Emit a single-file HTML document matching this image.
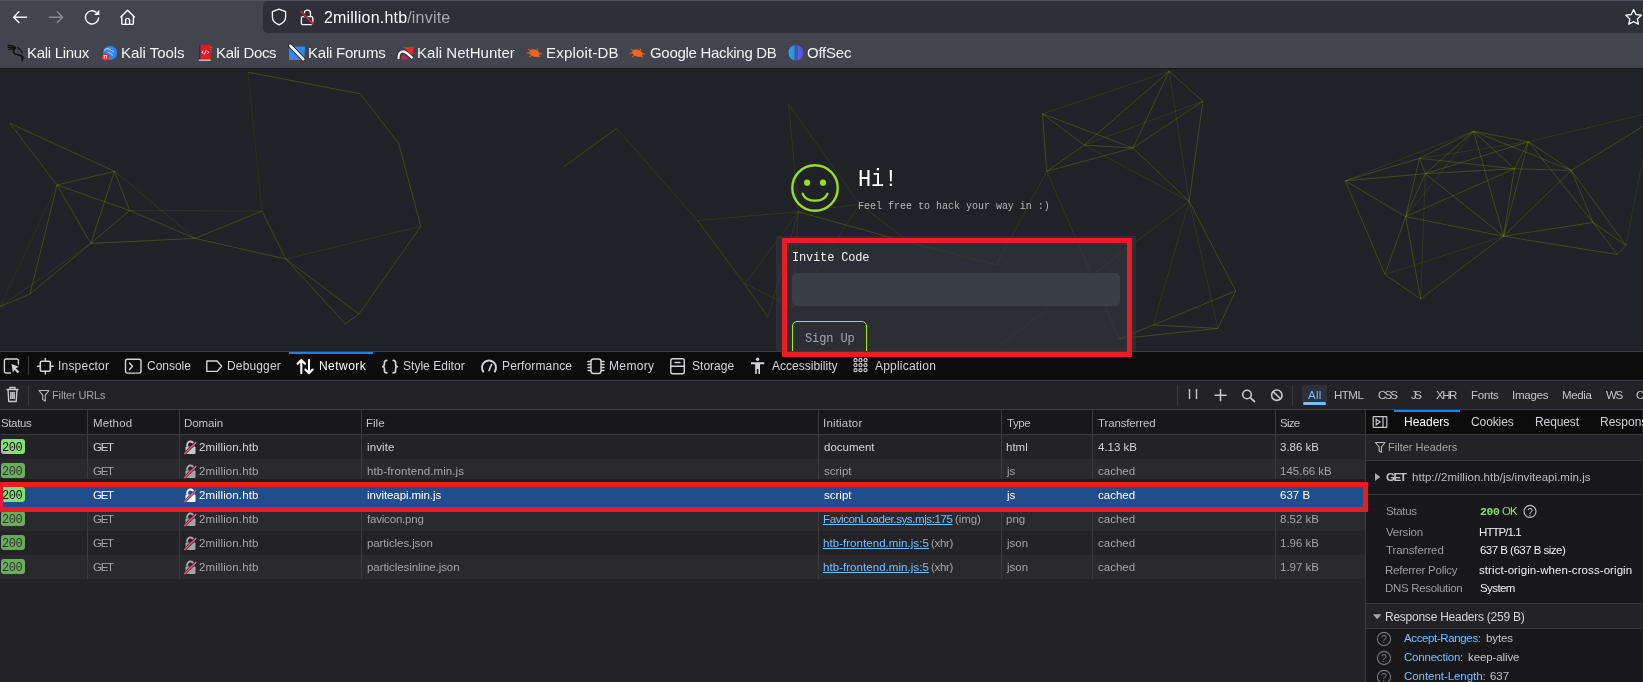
<!DOCTYPE html>
<html><head><meta charset="utf-8"><style>
*{box-sizing:border-box;margin:0;padding:0}
html,body{width:1643px;height:682px;overflow:hidden;background:#232327;font-family:"Liberation Sans",sans-serif;position:relative}
.t{position:absolute;white-space:nowrap;will-change:transform}
.b{position:absolute}
svg{position:absolute;overflow:visible}
.lnk{color:#75bfff;text-decoration:underline;text-underline-offset:1px}
</style></head><body>
<div class="b" style="left:0;top:0;width:1643px;height:68px;background:#42454e"></div>
<div class="b" style="left:0;top:0;width:1643px;height:1px;background:#53565e"></div>
<div class="b" style="left:263px;top:1px;width:1400px;height:32px;background:#2f3037;border-radius:5px"></div>
<svg style="left:0;top:0" width="160" height="35"><g fill="none" stroke="#fbfbfe" stroke-width="1.4" stroke-linecap="round" stroke-linejoin="round"><path d="M13.6 17.2H26.6M18.9 11.8L13.6 17.2L18.9 22.6"/></g><g fill="none" stroke="#8c8d93" stroke-width="1.4" stroke-linecap="round" stroke-linejoin="round"><path d="M49.6 17.2H62.6M57.3 11.8L62.6 17.2L57.3 22.6"/></g><path d="M98.6 17.4A6.6 6.6 0 1 1 96.4 12.4" fill="none" stroke="#fbfbfe" stroke-width="1.4"/><path d="M99.3 9.8V15H94.1Z" fill="#fbfbfe"/><g fill="none" stroke="#fbfbfe" stroke-width="1.4" stroke-linejoin="round" stroke-linecap="round"><path d="M120.8 17.1L127.6 10.3L134.4 17.1"/><path d="M121.8 16.4V23.2Q121.8 24.4 123 24.4H132.2Q133.4 24.4 133.4 23.2V16.4"/><path d="M125.6 24.4V20.4A2 2 0 0 1 129.6 20.4V24.4"/></g></svg>
<svg style="left:0;top:0" width="330" height="35"><path d="M279 9.2L285.6 11.7V17.2C285.6 20.6 282.6 23.3 279 24.8C275.4 23.3 272.4 20.6 272.4 17.2V11.7Z" fill="none" stroke="#fbfbfe" stroke-width="1.3" stroke-linejoin="round"/><path d="M304.3 16.5V13.3A3.1 3.1 0 0 1 310.5 13.3V16.5" fill="none" stroke="#fbfbfe" stroke-width="1.3"/><rect x="301.4" y="16.7" width="11.4" height="7.9" rx="1.3" fill="none" stroke="#fbfbfe" stroke-width="1.3"/><path d="M300.4 11L313.6 24.6" stroke="#2f3037" stroke-width="2.6"/><path d="M300.4 11L313.6 24.6" stroke="#e0234e" stroke-width="1.4"/></svg>
<div class="t" style="left:324.20px;top:9.76px;font-family:'Liberation Sans',sans-serif;font-size:16px;line-height:16px;letter-spacing:0.192px;color:#fbfbfe;">2million.htb<span style="color:#a9aab0">/invite</span></div>
<svg style="left:1616.5px;top:0" width="28" height="35"><path d="M1.6 0" fill="none"/><path d="M16.6 9.6L19 14.5L24.3 15.2L20.4 18.9L21.4 24.2L16.6 21.7L11.8 24.2L12.8 18.9L8.9 15.2L14.2 14.5Z" fill="none" stroke="#fbfbfe" stroke-width="1.3" stroke-linejoin="round"/></svg>
<div class="t" style="left:26.86px;top:45.10px;font-family:'Liberation Sans',sans-serif;font-size:15px;line-height:15px;letter-spacing:-0.300px;color:#f4f4f6;">Kali Linux</div>
<div class="t" style="left:120.96px;top:45.10px;font-family:'Liberation Sans',sans-serif;font-size:15px;line-height:15px;letter-spacing:-0.042px;color:#f4f4f6;">Kali Tools</div>
<div class="t" style="left:216.06px;top:45.10px;font-family:'Liberation Sans',sans-serif;font-size:15px;line-height:15px;letter-spacing:-0.352px;color:#f4f4f6;">Kali Docs</div>
<div class="t" style="left:308.06px;top:45.10px;font-family:'Liberation Sans',sans-serif;font-size:15px;line-height:15px;letter-spacing:-0.226px;color:#f4f4f6;">Kali Forums</div>
<div class="t" style="left:417.16px;top:45.10px;font-family:'Liberation Sans',sans-serif;font-size:15px;line-height:15px;letter-spacing:0.025px;color:#f4f4f6;">Kali NetHunter</div>
<div class="t" style="left:546.26px;top:45.10px;font-family:'Liberation Sans',sans-serif;font-size:15px;line-height:15px;letter-spacing:0.194px;color:#f4f4f6;">Exploit-DB</div>
<div class="t" style="left:649.75px;top:45.10px;font-family:'Liberation Sans',sans-serif;font-size:15px;line-height:15px;letter-spacing:-0.306px;color:#f4f4f6;">Google Hacking DB</div>
<div class="t" style="left:807.29px;top:45.10px;font-family:'Liberation Sans',sans-serif;font-size:15px;line-height:15px;letter-spacing:-0.228px;color:#f4f4f6;">OffSec</div>
<svg style="left:0;top:36px" width="860" height="30"><g fill="none" stroke="#0d0d0d" stroke-linecap="round"><path d="M8.2 9.5C11 9.3 13.5 9.8 15.2 11.5M8.2 11.4C11 11.2 13 11.5 14.6 12.5M8.6 13.3C10.6 13 12.5 12.8 14 13" stroke-width="1.3"/><path d="M15.4 12C13 13.5 12.8 16.5 14.8 17.8C16.8 19 19.6 18.5 21.1 20C22.1 21 22.2 23 22.5 24.5" stroke-width="1.5"/><path d="M17.5 11.5C19.5 12.5 21.5 14.5 22.2 16.5M21.5 19.5C23 20.5 23.8 21.5 24 22.5" stroke-width="1.1"/></g><circle cx="110.1" cy="16.9" r="7" fill="#2f86f6"/><path d="M103.8 14.5C106 12.3 108.5 12.2 110 13.5C111.5 14.8 113 15.5 114.2 15.8M107.5 16C109.5 16.5 111.5 18 113 19.5" fill="none" stroke="#cfe6ff" stroke-width="0.9"/><circle cx="105.7" cy="21.1" r="3.7" fill="#e8262b"/><path d="M104.2 19.6V22.8M106.6 19.6V22.8M103.6 19.6H107.3" stroke="#fff" stroke-width="0.8"/><rect x="198.9" y="8.9" width="11.8" height="14.9" fill="#e3191c"/><rect x="198.9" y="8.9" width="1.6" height="14.9" fill="#1d2f7a"/><rect x="198.9" y="23.6" width="11.8" height="1.1" fill="#e8e8e8"/><rect x="210.7" y="10.8" width="0.9" height="1.6" fill="#f08020"/><rect x="210.7" y="13" width="0.9" height="1.6" fill="#3aa050"/><rect x="210.7" y="15.2" width="0.9" height="1.6" fill="#5060d0"/><path d="M203.2 14.8L202 16.3L203.2 17.8M207.4 14.8L208.6 16.3L207.4 17.8M206.2 14.3L204.4 18.4" fill="none" stroke="#fff" stroke-width="1"/><path d="M289 10.4H305.1L304.2 23.9H289Z" fill="#2f86f6"/><path d="M290.3 9.8L303.3 23.2" stroke="#111" stroke-width="4.2" stroke-linecap="round"/><path d="M290.3 9.8L303.3 23.2" stroke="#f4f4f4" stroke-width="2.8" stroke-linecap="round"/><path d="M402.8 11H413.9L412.3 19.5Z" fill="#f0282d"/><path d="M398.5 22.8C398 18 400.5 15 403.5 15.5C406.5 16 409.5 19.5 412.5 22.2" fill="none" stroke="#111" stroke-width="3.6"/><path d="M398.5 22.8C398 18 400.5 15 403.5 15.5C406.5 16 409.5 19.5 412.5 22.2" fill="none" stroke="#f8f8f8" stroke-width="2.4"/><path d="M401.5 23.5C401 20 402.5 18.6 404 19.2C405.5 19.8 407 21.5 408 23.3Z" fill="#d81b50"/><ellipse cx="534.5" cy="17.2" rx="5.5" ry="3.6" transform="rotate(20 534.5 17.2)" fill="#f0641e"/><path d="M528 13L531 15M529 21L532 19M537 12.5L538 14.5M540 21L537.5 19.5M526.5 17L529.5 17M539.5 17.5L542 18" stroke="#f0641e" stroke-width="1"/><ellipse cx="637.5" cy="17.2" rx="5.5" ry="3.6" transform="rotate(20 637.5 17.2)" fill="#f0641e"/><path d="M631 13L634 15M632 21L635 19M640 12.5L641 14.5M643 21L640.5 19.5M629.5 17L632.5 17M642.5 17.5L645 18" stroke="#f0641e" stroke-width="1"/><defs><linearGradient id="og" x1="0" y1="0" x2="1" y2="0"><stop offset="0" stop-color="#19b4f0"/><stop offset="1" stop-color="#6a3fd8"/></linearGradient></defs><ellipse cx="796" cy="16.8" rx="7.5" ry="7.8" fill="url(#og)"/><path d="M795.2 8.5V25.5M797 8.5V25.5" stroke="#42454e" stroke-width="0.9"/><path d="M796.1 18V24.5" stroke="#7a3fe0" stroke-width="0.9"/></svg>
<div class="b" style="left:0;top:68px;width:1643px;height:283px;background:#1f2226"></div>
<div class="b" style="left:0;top:68px;width:1643px;height:1px;background:#17191d"></div>
<svg style="left:0;top:68px" width="1643" height="283"><path d="M10.0 55.4L57.0 117.0M10.0 55.4L114.6 103.3M57.0 117.0L114.6 103.3M57.0 117.0L129.6 142.5M114.6 103.3L129.6 142.5M57.0 117.0L90.8 175.4M114.6 103.3L90.8 175.4M129.6 142.5L90.8 175.4M129.6 142.5L195.0 170.4M90.8 175.4L195.0 170.4M195.0 170.4L262.0 143.0M195.0 170.4L285.8 191.0M262.0 143.0L285.8 191.0M248.0 4.2L360.4 25.8M360.4 25.8L398.8 75.8M398.8 75.8L420.8 158.3M420.8 158.3L359.0 246.0M285.8 191.0L345.4 255.8M345.4 255.8L359.0 246.0M90.8 175.4L30.0 226.0M30.0 226.0L0.0 238.7M57.0 117.0L30.0 226.0M285.8 191.0L359.0 246.0M563.7 98.8L616.7 60.4M1169.2 3.3L1202.9 33.3M1169.2 3.3L1132.9 80.0M1169.2 3.3L1084.2 77.1M1042.5 45.8L1132.9 80.0M1202.9 33.3L1132.9 80.0M1202.9 33.3L1189.2 133.3M1042.5 45.8L1084.2 77.1M1042.5 45.8L1046.7 103.3M1084.2 77.1L1132.9 80.0M1046.7 103.3L1084.2 77.1M1046.7 103.3L1132.9 80.0M1132.9 80.0L1189.2 133.3M1189.2 133.3L1235.8 222.9M1235.8 222.9L1217.9 260.4M1235.8 222.9L1153.3 257.0M1153.3 257.0L1217.9 260.4M1153.3 257.0L1119.2 270.8M1119.2 270.8L1217.9 260.4M798.3 143.8L910.8 175.0M1345.3 112.8L1419.5 90.3M1345.3 112.8L1425.3 105.7M1345.3 112.8L1405.7 148.6M1345.3 112.8L1384.9 206.5M1419.5 90.3L1425.3 105.7M1419.5 90.3L1473.6 63.3M1419.5 90.3L1514.4 100.8M1419.5 90.3L1405.7 148.6M1425.3 105.7L1473.6 63.3M1425.3 105.7L1514.4 100.8M1425.3 105.7L1405.7 148.6M1425.3 105.7L1503.5 168.2M1473.6 63.3L1528.5 73.7M1473.6 63.3L1514.4 100.8M1473.6 63.3L1503.5 168.2M1528.5 73.7L1514.4 100.8M1528.5 73.7L1571.4 102.4M1528.5 73.7L1593.0 154.5M1514.4 100.8L1571.4 102.4M1514.4 100.8L1503.5 168.2M1571.4 102.4L1503.5 168.2M1571.4 102.4L1593.0 154.5M1571.4 102.4L1626.0 177.4M1405.7 148.6L1503.5 168.2M1405.7 148.6L1384.9 206.5M1405.7 148.6L1420.7 231.0M1528.5 73.7L1503.5 168.2M1425.3 105.7L1528.5 73.7M1405.7 148.6L1514.4 100.8M1473.6 63.3L1571.4 102.4M1503.5 168.2L1593.0 154.5M1503.5 168.2L1617.2 186.5M1593.0 154.5L1626.0 177.4M1593.0 154.5L1617.2 186.5M1626.0 177.4L1617.2 186.5M1384.9 206.5L1420.7 231.0M1420.7 231.0L1503.5 168.2M1571.4 102.4L1650.0 54.0" stroke="#a8e000" stroke-opacity="0.21" stroke-width="1" fill="none"/><path d="M114.6 103.3L195.0 170.4M129.6 142.5L262.0 143.0M285.8 191.0L420.8 158.3M90.8 175.4L0.0 238.7M616.7 60.4L697.5 152.5M697.5 152.5L798.3 143.8M798.3 143.8L788.7 36.3M697.5 152.5L745.0 215.8M697.5 152.5L768.0 249.0M745.0 215.8L768.0 249.0M745.0 215.8L793.0 239.6M798.3 143.8L768.0 249.0M1042.5 45.8L1169.2 3.3M1169.2 3.3L1189.2 133.3M1202.9 33.3L1084.2 77.1M1084.2 77.1L1189.2 133.3M1189.2 133.3L1153.3 257.0M1046.7 103.3L1119.2 270.8M1189.2 133.3L1000.0 277.0M1189.2 133.3L1217.9 260.4M1046.7 103.3L996.3 196.7M996.3 196.7L910.8 175.0M788.7 36.3L859.7 136.3M798.3 143.8L859.7 136.3M859.7 136.3L910.8 175.0M859.7 136.3L793.0 239.6M798.3 143.8L745.0 215.8M798.3 143.8L793.0 239.6M1345.3 112.8L1473.6 63.3M1419.5 90.3L1528.5 73.7M1384.9 206.5L1503.5 168.2M1528.5 73.7L1650.0 45.0M1626.0 177.4L1650.0 54.0M1425.3 105.7L1420.7 231.0M1405.7 148.6L1473.6 63.3" stroke="#a8e000" stroke-opacity="0.11" stroke-width="1" fill="none"/><path d="M262.0 143.0L248.0 4.2M57.0 117.0L0.0 238.7" stroke="#a8e000" stroke-opacity="0.07" stroke-width="1" fill="none"/></svg>
<div class="b" style="left:776px;top:236px;width:360px;height:115px;background:rgba(52,58,66,0.55);border-radius:1px"></div>
<div class="b" style="left:792px;top:272.5px;width:328px;height:33px;background:#3a3f47;border-radius:5px"></div>
<div class="b" style="left:792px;top:321px;width:75px;height:40px;border:1.3px solid #9fef00;border-radius:5px"></div>
<div class="t" style="left:805.15px;top:333.00px;font-family:'Liberation Mono',monospace;font-size:12px;line-height:12px;letter-spacing:-0.123px;color:#a4a7ad;">Sign Up</div>
<div class="t" style="left:791.63px;top:251.70px;font-family:'Liberation Mono',monospace;font-size:12px;line-height:12px;letter-spacing:-0.175px;color:#f2f2f2;">Invite Code</div>
<svg style="left:780px;top:150px" width="80" height="80"><circle cx="35" cy="38" r="22.7" fill="none" stroke="#9fdc1c" stroke-width="2.4"/><circle cx="27.1" cy="32.7" r="3.1" fill="#9fdc1c"/><circle cx="43" cy="32.7" r="3.1" fill="#9fdc1c"/><path d="M22.6 43.7C26.5 53 43.5 53 47.4 43.7" fill="none" stroke="#9fdc1c" stroke-width="2.2" stroke-linecap="round"/></svg>
<div class="t" style="left:857.64px;top:170.04px;font-family:'Liberation Mono',monospace;font-size:22px;line-height:22px;letter-spacing:-0.092px;color:#ffffff;transform:scaleY(1.07);transform-origin:0 85%;">Hi!</div>
<div class="t" style="left:858.45px;top:201.64px;font-family:'Liberation Mono',monospace;font-size:10px;line-height:10px;letter-spacing:-0.006px;color:#b4b6ba;">Feel free to hack your way in :)</div>
<div class="b" style="left:0;top:351px;width:1643px;height:331px;background:#232327"></div>
<div class="b" style="left:0;top:351px;width:1643px;height:1px;background:#3a3a3f"></div>
<div class="b" style="left:0;top:352px;width:1643px;height:28px;background:#0c0c0d"></div>
<div class="b" style="left:0;top:380px;width:1643px;height:1px;background:#3a3a3f"></div>
<div class="b" style="left:289px;top:352px;width:84px;height:2px;background:#0a84ff"></div>
<div class="t" style="left:58.19px;top:360.44px;font-family:'Liberation Sans',sans-serif;font-size:12px;line-height:12px;letter-spacing:0.205px;color:#d4d4d8;">Inspector</div>
<div class="t" style="left:146.90px;top:360.44px;font-family:'Liberation Sans',sans-serif;font-size:12px;line-height:12px;letter-spacing:-0.033px;color:#d4d4d8;">Console</div>
<div class="t" style="left:227.21px;top:360.44px;font-family:'Liberation Sans',sans-serif;font-size:12px;line-height:12px;letter-spacing:0.151px;color:#d4d4d8;">Debugger</div>
<div class="t" style="left:318.51px;top:360.44px;font-family:'Liberation Sans',sans-serif;font-size:12px;line-height:12px;letter-spacing:0.447px;color:#ffffff;">Network</div>
<div class="t" style="left:403.26px;top:360.44px;font-family:'Liberation Sans',sans-serif;font-size:12px;line-height:12px;letter-spacing:0.025px;color:#d4d4d8;">Style Editor</div>
<div class="t" style="left:502.01px;top:360.44px;font-family:'Liberation Sans',sans-serif;font-size:12px;line-height:12px;letter-spacing:0.133px;color:#d4d4d8;">Performance</div>
<div class="t" style="left:609.21px;top:360.44px;font-family:'Liberation Sans',sans-serif;font-size:12px;line-height:12px;letter-spacing:0.354px;color:#d4d4d8;">Memory</div>
<div class="t" style="left:691.76px;top:360.44px;font-family:'Liberation Sans',sans-serif;font-size:12px;line-height:12px;letter-spacing:0.020px;color:#d4d4d8;">Storage</div>
<div class="t" style="left:771.77px;top:360.44px;font-family:'Liberation Sans',sans-serif;font-size:12px;line-height:12px;letter-spacing:0.010px;color:#d4d4d8;">Accessibility</div>
<div class="t" style="left:875.17px;top:360.44px;font-family:'Liberation Sans',sans-serif;font-size:12px;line-height:12px;letter-spacing:0.210px;color:#d4d4d8;">Application</div>
<svg style="left:0;top:352px" width="960" height="27"><g fill="none" stroke="#d4d4d8" stroke-width="1.4" stroke-linejoin="round" stroke-linecap="round"><path d="M10.5 21H6.2A1.8 1.8 0 0 1 4.4 19.2V8.8A1.8 1.8 0 0 1 6.2 7H16.6A1.8 1.8 0 0 1 18.4 8.8V12"/><rect x="40.3" y="9.3" width="10" height="10" rx="1.5" stroke-width="1.6"/><path d="M45.3 6.5V9.3M45.3 19.3V22M37.5 14.3H40.3M50.3 14.3H53.1"/><rect x="125.5" y="7.3" width="15.5" height="13.8" rx="2"/><path d="M129.5 11L132.5 14.2L129.5 17.4"/><path d="M206.8 9H217.2L221.6 14.2L217.2 19.4H206.8Z"/><path d="M301.3 21.3V8M297.6 11.7L301.3 8L305 11.7M309 8V21.3M305.3 17.6L309 21.3L312.7 17.6" stroke="#ffffff" stroke-width="2.1"/><path d="M386.8 8.3C384.6 8.3 384.4 9.3 384.4 11V12.6C384.4 13.7 383.8 14.4 382.8 14.6C383.8 14.8 384.4 15.5 384.4 16.6V18.2C384.4 19.9 384.6 20.9 386.8 20.9" stroke-width="1.7"/><path d="M393.2 8.3C395.4 8.3 395.6 9.3 395.6 11V12.6C395.6 13.7 396.2 14.4 397.2 14.6C396.2 14.8 395.6 15.5 395.6 16.6V18.2C395.6 19.9 395.4 20.9 393.2 20.9" stroke-width="1.7"/><path d="M483.3 19.6A7 7 0 1 1 494.7 19.6" stroke-width="1.9"/><path d="M489 18.5L491.6 12.5" stroke-width="1.7"/><rect x="591" y="7" width="10" height="14.5" rx="2.5"/><path d="M588 9.5H590.5M588 12.5H590.5M588 15.5H590.5M588 18.5H590.5M601.5 9.5H604M601.5 12.5H604M601.5 15.5H604M601.5 18.5H604"/><rect x="670.8" y="6.8" width="13.5" height="15" rx="2"/><path d="M670.8 14.2H684.3M675 10.5H680"/></g><circle cx="757.6" cy="7.3" r="1.7" fill="#d4d4d8"/><path d="M751 10.3H764.3V12.2H760V22H758.4V17H756.8V22H755.2V12.2H751Z" fill="#d4d4d8"/><g fill="none" stroke="#d4d4d8" stroke-width="1.1"><circle cx="855.5" cy="8.2" r="1.6"/><circle cx="855.5" cy="13.2" r="1.6"/><circle cx="855.5" cy="18.2" r="1.6"/><circle cx="860.5" cy="8.2" r="1.6"/><circle cx="860.5" cy="13.2" r="1.6"/><circle cx="860.5" cy="18.2" r="1.6"/><circle cx="865.5" cy="8.2" r="1.6"/><circle cx="865.5" cy="13.2" r="1.6"/><circle cx="865.5" cy="18.2" r="1.6"/></g></svg>
<svg style="left:0;top:352px" width="30" height="27"><path d="M11.5 12L19 14.8L15.8 16.2L19.3 19.7L17.8 21.2L14.3 17.7L12.9 20.8Z" fill="#d4d4d8"/></svg>
<div class="b" style="left:28px;top:356px;width:1px;height:19px;background:#3a3a3f"></div>
<div class="b" style="left:0;top:409px;width:1643px;height:1px;background:#3a3a3f"></div>
<div class="b" style="left:28px;top:385px;width:1px;height:20px;background:#3a3a3f"></div>
<div class="b" style="left:1177px;top:385px;width:1px;height:20px;background:#3a3a3f"></div>
<div class="b" style="left:1292px;top:385px;width:1px;height:20px;background:#3a3a3f"></div>
<div class="t" style="left:52.39px;top:390.29px;font-family:'Liberation Sans',sans-serif;font-size:11px;line-height:11px;letter-spacing:-0.141px;color:#a3a3a7;">Filter URLs</div>
<svg style="left:0;top:380px" width="1300" height="29"><g fill="none" stroke="#c8c8cc" stroke-width="1.4" stroke-linejoin="round"><path d="M6.5 9.5H18.5M10 9.5V7.5H15V9.5M8 9.5L8.8 21.5H16.2L17 9.5M10.8 12V19M12.5 12V19M14.2 12V19"/></g><path d="M39 10.5H49L45.3 15.2V21L42.7 19.5V15.2Z" fill="none" stroke="#b8b8bc" stroke-width="1.1" stroke-linejoin="round"/><g fill="none" stroke="#c8c8cc" stroke-width="1.4" stroke-linecap="round"><path d="M1189.5 9.5V18.5M1196.5 9.5V18.5"/><path d="M1215 15.3H1226M1220.5 9.8V20.8" stroke-width="1.6"/><circle cx="1247" cy="14.5" r="4.3" stroke-width="1.6"/><path d="M1250.2 17.7L1254.5 21.5" stroke-width="1.8"/><circle cx="1276.8" cy="15.2" r="5.2" stroke-width="1.6"/><path d="M1273.2 11.6L1280.4 18.8" stroke-width="1.6"/></g></svg>
<div class="b" style="left:1302px;top:385px;width:25px;height:19px;background:#2c313b;border-radius:2px"></div>
<div class="b" style="left:1303px;top:402px;width:23px;height:2.5px;background:#75bfff;border-radius:2px"></div>
<div class="t" style="left:1307.97px;top:389.77px;font-family:'Liberation Sans',sans-serif;font-size:11.5px;line-height:11.5px;letter-spacing:0.256px;color:#75bfff;">All</div>
<div class="t" style="left:1334.05px;top:389.77px;font-family:'Liberation Sans',sans-serif;font-size:11.5px;line-height:11.5px;letter-spacing:-0.486px;color:#c4c4c8;">HTML</div>
<div class="t" style="left:1377.62px;top:389.77px;font-family:'Liberation Sans',sans-serif;font-size:11.5px;line-height:11.5px;letter-spacing:-1.834px;color:#c4c4c8;">CSS</div>
<div class="t" style="left:1410.83px;top:389.77px;font-family:'Liberation Sans',sans-serif;font-size:11.5px;line-height:11.5px;letter-spacing:-2.436px;color:#c4c4c8;">JS</div>
<div class="t" style="left:1435.64px;top:389.77px;font-family:'Liberation Sans',sans-serif;font-size:11.5px;line-height:11.5px;letter-spacing:-1.544px;color:#c4c4c8;">XHR</div>
<div class="t" style="left:1470.75px;top:389.77px;font-family:'Liberation Sans',sans-serif;font-size:11.5px;line-height:11.5px;letter-spacing:-0.225px;color:#c4c4c8;">Fonts</div>
<div class="t" style="left:1511.74px;top:389.77px;font-family:'Liberation Sans',sans-serif;font-size:11.5px;line-height:11.5px;letter-spacing:-0.231px;color:#c4c4c8;">Images</div>
<div class="t" style="left:1561.55px;top:389.77px;font-family:'Liberation Sans',sans-serif;font-size:11.5px;line-height:11.5px;letter-spacing:-0.372px;color:#c4c4c8;">Media</div>
<div class="t" style="left:1605.94px;top:389.77px;font-family:'Liberation Sans',sans-serif;font-size:11.5px;line-height:11.5px;letter-spacing:-1.469px;color:#c4c4c8;">WS</div>
<div class="t" style="left:1636.12px;top:389.77px;font-family:'Liberation Sans',sans-serif;font-size:11.5px;line-height:11.5px;letter-spacing:0.000px;color:#c4c4c8;">C</div>
<div class="b" style="left:0;top:410px;width:1366px;height:24px;background:#18181a"></div>
<div class="b" style="left:0;top:434px;width:1366px;height:1px;background:#3a3a3f"></div>
<div class="t" style="left:0.98px;top:417.77px;font-family:'Liberation Sans',sans-serif;font-size:11.5px;line-height:11.5px;letter-spacing:-0.377px;color:#c2c2c6;">Status</div>
<div class="t" style="left:92.65px;top:417.77px;font-family:'Liberation Sans',sans-serif;font-size:11.5px;line-height:11.5px;letter-spacing:0.143px;color:#c2c2c6;">Method</div>
<div class="t" style="left:184.05px;top:417.77px;font-family:'Liberation Sans',sans-serif;font-size:11.5px;line-height:11.5px;letter-spacing:-0.090px;color:#c2c2c6;">Domain</div>
<div class="t" style="left:366.35px;top:417.77px;font-family:'Liberation Sans',sans-serif;font-size:11.5px;line-height:11.5px;letter-spacing:0.007px;color:#c2c2c6;">File</div>
<div class="t" style="left:823.04px;top:417.77px;font-family:'Liberation Sans',sans-serif;font-size:11.5px;line-height:11.5px;letter-spacing:0.190px;color:#c2c2c6;">Initiator</div>
<div class="t" style="left:1006.74px;top:417.77px;font-family:'Liberation Sans',sans-serif;font-size:11.5px;line-height:11.5px;letter-spacing:-0.393px;color:#c2c2c6;">Type</div>
<div class="t" style="left:1097.94px;top:417.77px;font-family:'Liberation Sans',sans-serif;font-size:11.5px;line-height:11.5px;letter-spacing:-0.142px;color:#c2c2c6;">Transferred</div>
<div class="t" style="left:1280.28px;top:417.77px;font-family:'Liberation Sans',sans-serif;font-size:11.5px;line-height:11.5px;letter-spacing:-0.720px;color:#c2c2c6;">Size</div>
<div class="b" style="left:0;top:435px;width:1366px;height:24px;background:#232327"></div>
<div class="b" style="left:1px;top:439px;width:24px;height:15px;background:#86de74;border-radius:3px;opacity:1"></div>
<div class="t" style="left:2.46px;top:442.30px;font-family:'Liberation Mono',monospace;font-size:12px;line-height:12px;letter-spacing:-0.420px;color:#0c0c0d;opacity:1;">200</div>
<div class="t" style="left:93.02px;top:441.77px;font-family:'Liberation Sans',sans-serif;font-size:11.5px;line-height:11.5px;letter-spacing:-1.299px;color:#d4d4d8;">GET</div>
<svg style="left:183px;top:440px" width="15" height="15"><path d="M4.2 6.5V4.8A3.3 3.3 0 0 1 10.8 4.8V6.5" fill="none" stroke="#c8c8cc" stroke-width="1.8"/><rect x="2.5" y="6.5" width="10" height="7.5" rx="1" fill="#c8c8cc"/><path d="M1.2 14L13.2 2" stroke="#232327" stroke-width="2.6"/><path d="M1.2 14L13.2 2" stroke="#ff4f7a" stroke-width="1.4"/></svg>
<div class="t" style="left:199.33px;top:441.77px;font-family:'Liberation Sans',sans-serif;font-size:11.5px;line-height:11.5px;letter-spacing:0.107px;color:#d4d4d8;">2million.htb</div>
<div class="t" style="left:366.62px;top:441.77px;font-family:'Liberation Sans',sans-serif;font-size:11.5px;line-height:11.5px;letter-spacing:0.128px;color:#d4d4d8;">invite</div>
<div class="t" style="left:823.61px;top:441.77px;font-family:'Liberation Sans',sans-serif;font-size:11.5px;line-height:11.5px;letter-spacing:0.000px;color:#d4d4d8;">document</div>
<div class="t" style="left:1006.20px;top:441.77px;font-family:'Liberation Sans',sans-serif;font-size:11.5px;line-height:11.5px;letter-spacing:0.000px;color:#d4d4d8;">html</div>
<div class="t" style="left:1097.94px;top:441.77px;font-family:'Liberation Sans',sans-serif;font-size:11.5px;line-height:11.5px;letter-spacing:0.000px;color:#d4d4d8;">4.13 kB</div>
<div class="t" style="left:1280.37px;top:441.77px;font-family:'Liberation Sans',sans-serif;font-size:11.5px;line-height:11.5px;letter-spacing:0.000px;color:#d4d4d8;">3.86 kB</div>
<div class="b" style="left:0;top:459px;width:1366px;height:24px;background:#2a2a2e"></div>
<div class="b" style="left:1px;top:463px;width:24px;height:15px;background:#86de74;border-radius:3px;opacity:0.72"></div>
<div class="t" style="left:2.46px;top:466.30px;font-family:'Liberation Mono',monospace;font-size:12px;line-height:12px;letter-spacing:-0.420px;color:#0c0c0d;opacity:0.72;">200</div>
<div class="t" style="left:93.02px;top:465.77px;font-family:'Liberation Sans',sans-serif;font-size:11.5px;line-height:11.5px;letter-spacing:-1.299px;color:#a4a4a8;">GET</div>
<svg style="left:183px;top:464px" width="15" height="15"><path d="M4.2 6.5V4.8A3.3 3.3 0 0 1 10.8 4.8V6.5" fill="none" stroke="#a4a4a8" stroke-width="1.8"/><rect x="2.5" y="6.5" width="10" height="7.5" rx="1" fill="#a4a4a8"/><path d="M1.2 14L13.2 2" stroke="#2a2a2e" stroke-width="2.6"/><path d="M1.2 14L13.2 2" stroke="#ff4f7a" stroke-width="1.4"/></svg>
<div class="t" style="left:199.33px;top:465.77px;font-family:'Liberation Sans',sans-serif;font-size:11.5px;line-height:11.5px;letter-spacing:0.107px;color:#a4a4a8;">2million.htb</div>
<div class="t" style="left:366.59px;top:465.77px;font-family:'Liberation Sans',sans-serif;font-size:11.5px;line-height:11.5px;letter-spacing:0.098px;color:#a4a4a8;">htb-frontend.min.js</div>
<div class="t" style="left:823.78px;top:465.77px;font-family:'Liberation Sans',sans-serif;font-size:11.5px;line-height:11.5px;letter-spacing:0.000px;color:#a4a4a8;">script</div>
<div class="t" style="left:1007.29px;top:465.77px;font-family:'Liberation Sans',sans-serif;font-size:11.5px;line-height:11.5px;letter-spacing:0.000px;color:#a4a4a8;">js</div>
<div class="t" style="left:1097.71px;top:465.77px;font-family:'Liberation Sans',sans-serif;font-size:11.5px;line-height:11.5px;letter-spacing:0.000px;color:#a4a4a8;">cached</div>
<div class="t" style="left:1279.94px;top:465.77px;font-family:'Liberation Sans',sans-serif;font-size:11.5px;line-height:11.5px;letter-spacing:0.000px;color:#a4a4a8;">145.66 kB</div>
<div class="b" style="left:0;top:483px;width:1366px;height:24px;background:#204e8a"></div>
<div class="b" style="left:1px;top:487px;width:24px;height:15px;background:#86de74;border-radius:3px;opacity:1"></div>
<div class="t" style="left:2.46px;top:490.30px;font-family:'Liberation Mono',monospace;font-size:12px;line-height:12px;letter-spacing:-0.420px;color:#0c0c0d;opacity:1;">200</div>
<div class="t" style="left:93.02px;top:489.77px;font-family:'Liberation Sans',sans-serif;font-size:11.5px;line-height:11.5px;letter-spacing:-1.299px;color:#ffffff;">GET</div>
<svg style="left:183px;top:488px" width="15" height="15"><path d="M4.2 6.5V4.8A3.3 3.3 0 0 1 10.8 4.8V6.5" fill="none" stroke="#ffffff" stroke-width="1.8"/><rect x="2.5" y="6.5" width="10" height="7.5" rx="1" fill="#ffffff"/><path d="M1.2 14L13.2 2" stroke="#204e8a" stroke-width="2.6"/><path d="M1.2 14L13.2 2" stroke="#ff4f7a" stroke-width="1.4"/></svg>
<div class="t" style="left:199.33px;top:489.77px;font-family:'Liberation Sans',sans-serif;font-size:11.5px;line-height:11.5px;letter-spacing:0.107px;color:#ffffff;">2million.htb</div>
<div class="t" style="left:366.62px;top:489.77px;font-family:'Liberation Sans',sans-serif;font-size:11.5px;line-height:11.5px;letter-spacing:-0.082px;color:#ffffff;">inviteapi.min.js</div>
<div class="t" style="left:823.78px;top:489.77px;font-family:'Liberation Sans',sans-serif;font-size:11.5px;line-height:11.5px;letter-spacing:0.000px;color:#ffffff;">script</div>
<div class="t" style="left:1007.29px;top:489.77px;font-family:'Liberation Sans',sans-serif;font-size:11.5px;line-height:11.5px;letter-spacing:0.000px;color:#ffffff;">js</div>
<div class="t" style="left:1097.71px;top:489.77px;font-family:'Liberation Sans',sans-serif;font-size:11.5px;line-height:11.5px;letter-spacing:0.000px;color:#ffffff;">cached</div>
<div class="t" style="left:1280.22px;top:489.77px;font-family:'Liberation Sans',sans-serif;font-size:11.5px;line-height:11.5px;letter-spacing:0.000px;color:#ffffff;">637 B</div>
<div class="b" style="left:0;top:507px;width:1366px;height:24px;background:#2a2a2e"></div>
<div class="b" style="left:1px;top:511px;width:24px;height:15px;background:#86de74;border-radius:3px;opacity:0.72"></div>
<div class="t" style="left:2.46px;top:514.30px;font-family:'Liberation Mono',monospace;font-size:12px;line-height:12px;letter-spacing:-0.420px;color:#0c0c0d;opacity:0.72;">200</div>
<div class="t" style="left:93.02px;top:513.77px;font-family:'Liberation Sans',sans-serif;font-size:11.5px;line-height:11.5px;letter-spacing:-1.299px;color:#a4a4a8;">GET</div>
<svg style="left:183px;top:512px" width="15" height="15"><path d="M4.2 6.5V4.8A3.3 3.3 0 0 1 10.8 4.8V6.5" fill="none" stroke="#a4a4a8" stroke-width="1.8"/><rect x="2.5" y="6.5" width="10" height="7.5" rx="1" fill="#a4a4a8"/><path d="M1.2 14L13.2 2" stroke="#2a2a2e" stroke-width="2.6"/><path d="M1.2 14L13.2 2" stroke="#ff4f7a" stroke-width="1.4"/></svg>
<div class="t" style="left:199.33px;top:513.77px;font-family:'Liberation Sans',sans-serif;font-size:11.5px;line-height:11.5px;letter-spacing:0.107px;color:#a4a4a8;">2million.htb</div>
<div class="t" style="left:367.23px;top:513.77px;font-family:'Liberation Sans',sans-serif;font-size:11.5px;line-height:11.5px;letter-spacing:-0.193px;color:#a4a4a8;">favicon.png</div>
<div class="t" style="left:823.15px;top:513.77px;font-family:'Liberation Sans',sans-serif;font-size:11.5px;line-height:11.5px;letter-spacing:-0.393px;color:#75bfff;"><span class="lnk">FaviconLoader.sys.mjs:175</span></div>
<div class="t" style="left:955.18px;top:513.77px;font-family:'Liberation Sans',sans-serif;font-size:11.5px;line-height:11.5px;letter-spacing:-0.096px;color:#a4a4a8;">(img)</div>
<div class="t" style="left:1006.25px;top:513.77px;font-family:'Liberation Sans',sans-serif;font-size:11.5px;line-height:11.5px;letter-spacing:0.000px;color:#a4a4a8;">png</div>
<div class="t" style="left:1097.71px;top:513.77px;font-family:'Liberation Sans',sans-serif;font-size:11.5px;line-height:11.5px;letter-spacing:0.000px;color:#a4a4a8;">cached</div>
<div class="t" style="left:1280.31px;top:513.77px;font-family:'Liberation Sans',sans-serif;font-size:11.5px;line-height:11.5px;letter-spacing:0.000px;color:#a4a4a8;">8.52 kB</div>
<div class="b" style="left:0;top:531px;width:1366px;height:24px;background:#232327"></div>
<div class="b" style="left:1px;top:535px;width:24px;height:15px;background:#86de74;border-radius:3px;opacity:0.72"></div>
<div class="t" style="left:2.46px;top:538.30px;font-family:'Liberation Mono',monospace;font-size:12px;line-height:12px;letter-spacing:-0.420px;color:#0c0c0d;opacity:0.72;">200</div>
<div class="t" style="left:93.02px;top:537.77px;font-family:'Liberation Sans',sans-serif;font-size:11.5px;line-height:11.5px;letter-spacing:-1.299px;color:#a4a4a8;">GET</div>
<svg style="left:183px;top:536px" width="15" height="15"><path d="M4.2 6.5V4.8A3.3 3.3 0 0 1 10.8 4.8V6.5" fill="none" stroke="#a4a4a8" stroke-width="1.8"/><rect x="2.5" y="6.5" width="10" height="7.5" rx="1" fill="#a4a4a8"/><path d="M1.2 14L13.2 2" stroke="#232327" stroke-width="2.6"/><path d="M1.2 14L13.2 2" stroke="#ff4f7a" stroke-width="1.4"/></svg>
<div class="t" style="left:199.33px;top:537.77px;font-family:'Liberation Sans',sans-serif;font-size:11.5px;line-height:11.5px;letter-spacing:0.107px;color:#a4a4a8;">2million.htb</div>
<div class="t" style="left:366.65px;top:537.77px;font-family:'Liberation Sans',sans-serif;font-size:11.5px;line-height:11.5px;letter-spacing:-0.087px;color:#a4a4a8;">particles.json</div>
<div class="t" style="left:823.30px;top:537.77px;font-family:'Liberation Sans',sans-serif;font-size:11.5px;line-height:11.5px;letter-spacing:0.047px;color:#75bfff;"><span class="lnk">htb-frontend.min.js:5</span></div>
<div class="t" style="left:931.28px;top:537.77px;font-family:'Liberation Sans',sans-serif;font-size:11.5px;line-height:11.5px;letter-spacing:-0.306px;color:#a4a4a8;">(xhr)</div>
<div class="t" style="left:1007.29px;top:537.77px;font-family:'Liberation Sans',sans-serif;font-size:11.5px;line-height:11.5px;letter-spacing:0.000px;color:#a4a4a8;">json</div>
<div class="t" style="left:1097.71px;top:537.77px;font-family:'Liberation Sans',sans-serif;font-size:11.5px;line-height:11.5px;letter-spacing:0.000px;color:#a4a4a8;">cached</div>
<div class="t" style="left:1279.94px;top:537.77px;font-family:'Liberation Sans',sans-serif;font-size:11.5px;line-height:11.5px;letter-spacing:0.000px;color:#a4a4a8;">1.96 kB</div>
<div class="b" style="left:0;top:555px;width:1366px;height:24px;background:#2a2a2e"></div>
<div class="b" style="left:1px;top:559px;width:24px;height:15px;background:#86de74;border-radius:3px;opacity:0.72"></div>
<div class="t" style="left:2.46px;top:562.30px;font-family:'Liberation Mono',monospace;font-size:12px;line-height:12px;letter-spacing:-0.420px;color:#0c0c0d;opacity:0.72;">200</div>
<div class="t" style="left:93.02px;top:561.77px;font-family:'Liberation Sans',sans-serif;font-size:11.5px;line-height:11.5px;letter-spacing:-1.299px;color:#a4a4a8;">GET</div>
<svg style="left:183px;top:560px" width="15" height="15"><path d="M4.2 6.5V4.8A3.3 3.3 0 0 1 10.8 4.8V6.5" fill="none" stroke="#a4a4a8" stroke-width="1.8"/><rect x="2.5" y="6.5" width="10" height="7.5" rx="1" fill="#a4a4a8"/><path d="M1.2 14L13.2 2" stroke="#2a2a2e" stroke-width="2.6"/><path d="M1.2 14L13.2 2" stroke="#ff4f7a" stroke-width="1.4"/></svg>
<div class="t" style="left:199.33px;top:561.77px;font-family:'Liberation Sans',sans-serif;font-size:11.5px;line-height:11.5px;letter-spacing:0.107px;color:#a4a4a8;">2million.htb</div>
<div class="t" style="left:366.65px;top:561.77px;font-family:'Liberation Sans',sans-serif;font-size:11.5px;line-height:11.5px;letter-spacing:-0.073px;color:#a4a4a8;">particlesinline.json</div>
<div class="t" style="left:823.30px;top:561.77px;font-family:'Liberation Sans',sans-serif;font-size:11.5px;line-height:11.5px;letter-spacing:0.047px;color:#75bfff;"><span class="lnk">htb-frontend.min.js:5</span></div>
<div class="t" style="left:931.28px;top:561.77px;font-family:'Liberation Sans',sans-serif;font-size:11.5px;line-height:11.5px;letter-spacing:-0.306px;color:#a4a4a8;">(xhr)</div>
<div class="t" style="left:1007.29px;top:561.77px;font-family:'Liberation Sans',sans-serif;font-size:11.5px;line-height:11.5px;letter-spacing:0.000px;color:#a4a4a8;">json</div>
<div class="t" style="left:1097.71px;top:561.77px;font-family:'Liberation Sans',sans-serif;font-size:11.5px;line-height:11.5px;letter-spacing:0.000px;color:#a4a4a8;">cached</div>
<div class="t" style="left:1279.94px;top:561.77px;font-family:'Liberation Sans',sans-serif;font-size:11.5px;line-height:11.5px;letter-spacing:0.000px;color:#a4a4a8;">1.97 kB</div>
<div class="b" style="left:87px;top:410px;width:1px;height:73px;background:#3a3a3f"></div>
<div class="b" style="left:87px;top:507px;width:1px;height:72px;background:#3a3a3f"></div>
<div class="b" style="left:179px;top:410px;width:1px;height:73px;background:#3a3a3f"></div>
<div class="b" style="left:179px;top:507px;width:1px;height:72px;background:#3a3a3f"></div>
<div class="b" style="left:361px;top:410px;width:1px;height:73px;background:#3a3a3f"></div>
<div class="b" style="left:361px;top:507px;width:1px;height:72px;background:#3a3a3f"></div>
<div class="b" style="left:818px;top:410px;width:1px;height:73px;background:#3a3a3f"></div>
<div class="b" style="left:818px;top:507px;width:1px;height:72px;background:#3a3a3f"></div>
<div class="b" style="left:1001px;top:410px;width:1px;height:73px;background:#3a3a3f"></div>
<div class="b" style="left:1001px;top:507px;width:1px;height:72px;background:#3a3a3f"></div>
<div class="b" style="left:1092px;top:410px;width:1px;height:73px;background:#3a3a3f"></div>
<div class="b" style="left:1092px;top:507px;width:1px;height:72px;background:#3a3a3f"></div>
<div class="b" style="left:1275px;top:410px;width:1px;height:73px;background:#3a3a3f"></div>
<div class="b" style="left:1275px;top:507px;width:1px;height:72px;background:#3a3a3f"></div>
<div class="b" style="left:0;top:479px;width:1366px;height:3px;background:#1d1d21"></div>
<div class="b" style="left:1365px;top:410px;width:277px;height:272px;background:#18181a"></div>
<div class="b" style="left:1365px;top:410px;width:1px;height:272px;background:#3a3a3f"></div>
<div class="b" style="left:1366px;top:410px;width:276px;height:24px;background:#0c0c0d"></div>
<div class="b" style="left:1365px;top:434px;width:277px;height:1px;background:#3a3a3f"></div>
<div class="b" style="left:1394px;top:410px;width:66px;height:2px;background:#0a84ff"></div>
<div class="b" style="left:1366px;top:435px;width:276px;height:25px;background:#232327"></div>
<div class="b" style="left:1365px;top:460px;width:277px;height:1px;background:#3a3a3f"></div>
<div class="b" style="left:1365px;top:494px;width:277px;height:1px;background:#3a3a3f"></div>
<div class="b" style="left:1366px;top:604px;width:276px;height:24px;background:#232327"></div>
<div class="b" style="left:1365px;top:603px;width:277px;height:1px;background:#3a3a3f"></div>
<div class="b" style="left:1365px;top:628px;width:277px;height:1px;background:#3a3a3f"></div>
<div class="t" style="left:1404.31px;top:416.34px;font-family:'Liberation Sans',sans-serif;font-size:12px;line-height:12px;letter-spacing:-0.008px;color:#ffffff;">Headers</div>
<div class="t" style="left:1471.00px;top:416.34px;font-family:'Liberation Sans',sans-serif;font-size:12px;line-height:12px;letter-spacing:-0.105px;color:#cfcfd3;">Cookies</div>
<div class="t" style="left:1534.71px;top:416.34px;font-family:'Liberation Sans',sans-serif;font-size:12px;line-height:12px;letter-spacing:-0.103px;color:#cfcfd3;">Request</div>
<div class="t" style="left:1600.11px;top:416.34px;font-family:'Liberation Sans',sans-serif;font-size:12px;line-height:12px;letter-spacing:0.000px;color:#cfcfd3;">Respons</div>
<div class="t" style="left:1388.39px;top:442.39px;font-family:'Liberation Sans',sans-serif;font-size:11px;line-height:11px;letter-spacing:0.016px;color:#a3a3a7;">Filter Headers</div>
<div class="t" style="left:1385.74px;top:471.57px;font-family:'Liberation Sans',sans-serif;font-weight:bold;font-size:11.5px;line-height:11.5px;letter-spacing:-1.379px;color:#c4c4c8;">GET</div>
<div class="t" style="left:1411.69px;top:471.57px;font-family:'Liberation Sans',sans-serif;font-size:11.5px;line-height:11.5px;letter-spacing:0.041px;color:#bdbdc1;">http://2million.htb/js/inviteapi.min.js</div>
<div class="t" style="left:1385.68px;top:505.67px;font-family:'Liberation Sans',sans-serif;font-size:11.5px;line-height:11.5px;letter-spacing:-0.317px;color:#9c9ca0;">Status</div>
<div class="t" style="left:1386.14px;top:526.87px;font-family:'Liberation Sans',sans-serif;font-size:11.5px;line-height:11.5px;letter-spacing:-0.213px;color:#9c9ca0;">Version</div>
<div class="t" style="left:1385.94px;top:545.27px;font-family:'Liberation Sans',sans-serif;font-size:11.5px;line-height:11.5px;letter-spacing:-0.122px;color:#9c9ca0;">Transferred</div>
<div class="t" style="left:1385.25px;top:564.77px;font-family:'Liberation Sans',sans-serif;font-size:11.5px;line-height:11.5px;letter-spacing:-0.255px;color:#9c9ca0;">Referrer Policy</div>
<div class="t" style="left:1385.25px;top:583.37px;font-family:'Liberation Sans',sans-serif;font-size:11.5px;line-height:11.5px;letter-spacing:-0.317px;color:#9c9ca0;">DNS Resolution</div>
<div class="t" style="left:1479.51px;top:506.09px;font-family:'Liberation Mono',monospace;font-weight:bold;font-size:11.5px;line-height:11.5px;letter-spacing:-0.374px;color:#86de74;">200</div>
<div class="t" style="left:1502.25px;top:505.67px;font-family:'Liberation Sans',sans-serif;font-size:11.5px;line-height:11.5px;letter-spacing:-1.027px;color:#86de74;">OK</div>
<div class="t" style="left:1479.25px;top:526.87px;font-family:'Liberation Sans',sans-serif;font-size:11.5px;line-height:11.5px;letter-spacing:-0.928px;color:#f0f0f4;">HTTP/1.1</div>
<div class="t" style="left:1479.62px;top:545.27px;font-family:'Liberation Sans',sans-serif;font-size:11.5px;line-height:11.5px;letter-spacing:-0.521px;color:#f0f0f4;">637 B (637 B size)</div>
<div class="t" style="left:1478.78px;top:564.77px;font-family:'Liberation Sans',sans-serif;font-size:11.5px;line-height:11.5px;letter-spacing:0.078px;color:#f0f0f4;">strict-origin-when-cross-origin</div>
<div class="t" style="left:1479.68px;top:583.37px;font-family:'Liberation Sans',sans-serif;font-size:11.5px;line-height:11.5px;letter-spacing:-0.592px;color:#f0f0f4;">System</div>
<div class="t" style="left:1385.31px;top:611.14px;font-family:'Liberation Sans',sans-serif;font-size:12px;line-height:12px;letter-spacing:-0.248px;color:#d4d4d8;">Response Headers (259 B)</div>
<div class="t" style="left:1404.37px;top:633.17px;font-family:'Liberation Sans',sans-serif;font-size:11.5px;line-height:11.5px;letter-spacing:-0.374px;color:#75bfff;">Accept-Ranges:</div>
<div class="t" style="left:1485.95px;top:633.17px;font-family:'Liberation Sans',sans-serif;font-size:11.5px;line-height:11.5px;letter-spacing:-0.109px;color:#c4c4c8;">bytes</div>
<div class="t" style="left:1403.83px;top:652.07px;font-family:'Liberation Sans',sans-serif;font-size:11.5px;line-height:11.5px;letter-spacing:-0.207px;color:#75bfff;">Connection:</div>
<div class="t" style="left:1468.12px;top:652.07px;font-family:'Liberation Sans',sans-serif;font-size:11.5px;line-height:11.5px;letter-spacing:-0.105px;color:#c4c4c8;">keep-alive</div>
<div class="t" style="left:1403.83px;top:671.17px;font-family:'Liberation Sans',sans-serif;font-size:11.5px;line-height:11.5px;letter-spacing:-0.055px;color:#75bfff;">Content-Length:</div>
<div class="t" style="left:1490.42px;top:671.17px;font-family:'Liberation Sans',sans-serif;font-size:11.5px;line-height:11.5px;letter-spacing:-0.063px;color:#c4c4c8;">637</div>
<svg style="left:1366px;top:410px" width="277" height="272"><g fill="none" stroke="#c8c8cc" stroke-width="1.2"><rect x="7.2" y="6.6" width="13.6" height="10.8" rx="0.5"/><path d="M17 6.6V17.4"/><path d="M10.2 9.2L14.2 12L10.2 14.8Z"/></g><path d="M9.5 32.5H19L15.4 37V42.3L13.1 41V37Z" fill="none" stroke="#b8b8bc" stroke-width="1.1" stroke-linejoin="round"/><path d="M9 63L14.3 67L9 71Z" fill="#a9a9ad"/><circle cx="164" cy="101.4" r="6" fill="none" stroke="#c4c4c8" stroke-width="1.1"/><text x="164" y="105.6" font-family="Liberation Sans" font-size="10" fill="#c4c4c8" text-anchor="middle">?</text><path d="M7 204.2H15.4L11.2 209.3Z" fill="#a9a9ad"/><circle cx="18" cy="229" r="6.6" fill="none" stroke="#77777b" stroke-width="1.1"/><text x="18" y="233.3" font-family="Liberation Sans" font-size="10.5" fill="#77777b" text-anchor="middle">?</text><circle cx="18" cy="248" r="6.6" fill="none" stroke="#77777b" stroke-width="1.1"/><text x="18" y="252.3" font-family="Liberation Sans" font-size="10.5" fill="#77777b" text-anchor="middle">?</text><circle cx="18" cy="267" r="6.6" fill="none" stroke="#77777b" stroke-width="1.1"/><text x="18" y="271.3" font-family="Liberation Sans" font-size="10.5" fill="#77777b" text-anchor="middle">?</text></svg>
<div class="b" style="left:782px;top:238px;width:350px;height:118.5px;border:5.2px solid #ed1c24"></div>
<div class="b" style="left:0;top:482px;width:1368px;height:30px;border:5px solid #ed1c24;border-left-width:3px"></div>
</body></html>
